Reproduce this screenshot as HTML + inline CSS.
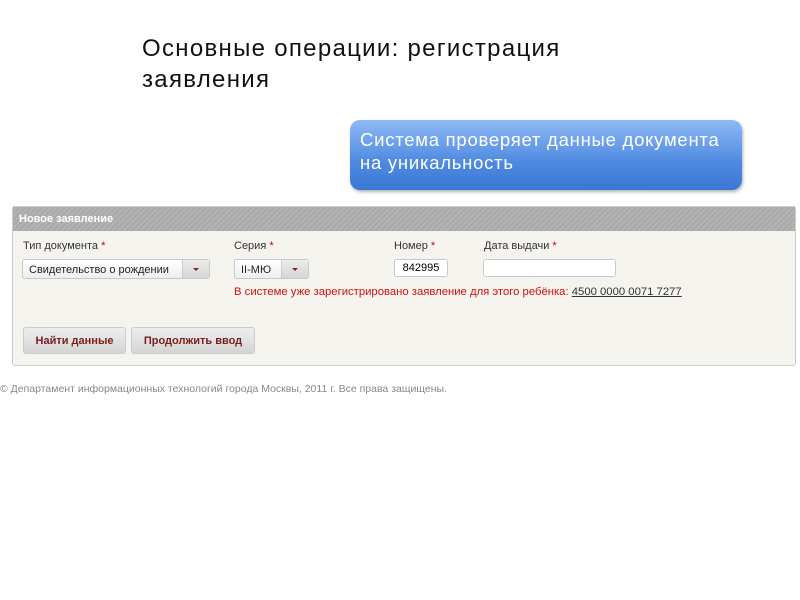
<!DOCTYPE html>
<html><head><meta charset="utf-8"><style>
body{margin:0;width:800px;height:600px;background:#fff;position:relative;font-family:"Liberation Sans","DejaVu Sans",sans-serif;overflow:hidden}
.a{position:absolute}
.t{left:142px;top:33px;font-size:24px;letter-spacing:1.3px;line-height:31px;color:#111}
.bub{left:350px;top:120px;width:392px;height:70px;border-radius:10px;background:linear-gradient(#8fbaf5,#4f8ae0 60%,#3b78d4);box-shadow:1px 2px 3px rgba(0,0,0,.3);color:#fff;font-size:18.5px;letter-spacing:0.75px;line-height:23px;padding:8px 10px;box-sizing:border-box;white-space:nowrap}
.panel{left:12px;top:206px;width:784px;height:160px;border:1px solid #ccc;border-radius:3px;background:#f5f3ee;box-sizing:border-box}
.hd{left:0;top:0;right:0;height:24px;background:repeating-linear-gradient(135deg,#a9a9a9 0 2px,#b3b3b3 2px 4px);color:#fff;font-weight:bold;font-size:11px;line-height:24px;padding-left:6px}
.lb{font-size:11px;color:#333}
.lb b{color:#c00;font-weight:normal}
.sel{height:20px;border:1px solid #c8c8c8;border-radius:3px;background:linear-gradient(#fff,#eee);font-size:11px;line-height:20px;padding-left:6px;box-sizing:border-box;color:#222}
.sel i{position:absolute;right:0;top:0;width:26px;height:18px;background:linear-gradient(#ececec,#d5d5d5);border-left:1px solid #ccc}
.sel i:after{content:"";position:absolute;left:10px;top:8px;border:3px solid transparent;border-top:3px solid #822;}
.in{height:18px;border:1px solid #c8c8c8;border-radius:3px;background:#fff;font-size:11px;line-height:17px;padding-left:6px;box-sizing:border-box}
.btn{height:27px;border:1px solid #ccc;border-radius:3px;background:linear-gradient(#eee,#d4d4d4);color:#7a1d1d;font-weight:bold;font-size:11px;line-height:26px;text-align:center;box-sizing:border-box}
</style></head><body>
<div class="a t">Основные операции: регистрация<br>заявления</div>
<div class="a bub">Система проверяет данные документа<br>на уникальность</div>
<svg class="a" style="left:570px;top:182px" width="120" height="14"><polygon points="8,2 105,2 16,8" fill="#3b78d4"/></svg>
<div class="a panel">
<div class="a hd">Новое заявление</div>
<div class="a lb" style="left:10px;top:33px">Тип документа <b>*</b></div>
<div class="a lb" style="left:221px;top:33px">Серия <b>*</b></div>
<div class="a lb" style="left:381px;top:33px">Номер <b>*</b></div>
<div class="a lb" style="left:471px;top:33px">Дата выдачи <b>*</b></div>
<div class="a sel" style="left:9px;top:52px;width:188px">Свидетельство о рождении<i></i></div>
<div class="a sel" style="left:221px;top:52px;width:75px">II-МЮ<i></i></div>
<div class="a in" style="left:381px;top:52px;width:54px;text-align:center;padding:0">842995</div>
<div class="a in" style="left:470px;top:52px;width:133px"></div>
<div class="a" style="left:221px;top:79px;font-size:11.3px;color:#d01010">В системе уже зарегистрировано заявление для этого ребёнка: <span style="color:#333;text-decoration:underline">4500 0000 0071 7277</span></div>
<div class="a btn" style="left:10px;top:120px;width:103px">Найти данные</div>
<div class="a btn" style="left:118px;top:120px;width:124px">Продолжить ввод</div>
</div>
<div class="a" style="left:0;top:383px;font-size:10.5px;color:#888">© Департамент информационных технологий города Москвы, 2011 г. Все права защищены.</div>
</body></html>
